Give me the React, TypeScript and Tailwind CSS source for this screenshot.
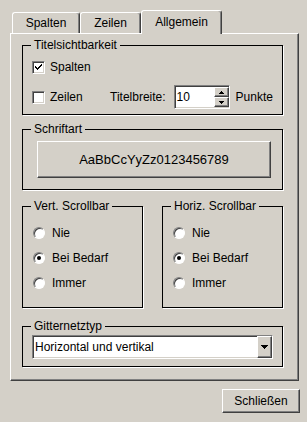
import React, { ReactNode } from 'react';
import clsx from 'clsx';

// classic win95-ish bevels
const SUNKEN =
  'border border-t-[#808080] border-l-[#808080] border-b-white border-r-white shadow-[inset_1px_1px_0_#404040,inset_-1px_-1px_0_#d4d0c8]';
const RAISED =
  'border border-t-white border-l-white border-b-[#404040] border-r-[#404040] shadow-[inset_-1px_-1px_0_#808080]';

type GroupProps = { title: string; className?: string; children?: ReactNode };

const Group = ({ title, className, children }: GroupProps) => (
  <div className={clsx('relative shrink-0 border border-black shadow-[1px_1px_0_#fff]', className)}>
    <span className="absolute left-[8px] top-[-8px] h-[14px] bg-[#d4d0c8] px-[3px] leading-[14px] whitespace-nowrap">
      {title}
    </span>
    {children}
  </div>
);

const Tab = ({ label, active, className }: { label: string; active?: boolean; className: string }) => (
  <div
    className={clsx(
      'flex justify-center rounded-t-[3px] border-l border-t border-r border-l-white border-t-white border-r-[#404040] bg-[#d4d0c8] shadow-[inset_-1px_0_0_#808080]',
      active ? 'relative z-10 -mb-px h-[24px] pt-[4px]' : 'h-[21px] pt-[3px]',
      className
    )}
  >
    {label}
  </div>
);

const Checkbox = ({ label, checked }: { label: string; checked?: boolean }) => (
  <div className="flex items-center gap-[5px]">
    <span className={clsx('flex h-[13px] w-[13px] items-center justify-center bg-white', SUNKEN)}>
      {checked && (
        <svg width="9" height="9" viewBox="0 0 9 9" shapeRendering="crispEdges">
          <path d="M1 3h1v1h1v1h1V4h1V3h1V2h1V1h1v2H7v1H6v1H5v1H4v1H3V6H2V5H1z" fill="#000" />
        </svg>
      )}
    </span>
    <span>{label}</span>
  </div>
);

const Radio = ({ label, checked }: { label: string; checked?: boolean }) => (
  <div className="flex h-[18px] items-center gap-[7px]">
    <span
      className={clsx(
        'flex h-[12px] w-[12px] items-center justify-center rounded-full bg-white border border-t-[#808080] border-l-[#808080] border-b-white border-r-white shadow-[inset_1px_1px_0_#404040]'
      )}
    >
      {checked && <span className="h-[4px] w-[4px] rounded-full bg-black" />}
    </span>
    <span>{label}</span>
  </div>
);

const Arrow = ({ down, size = 'sm' }: { down?: boolean; size?: 'sm' | 'md' }) => {
  const w = size === 'md' ? 7 : 5;
  const h = size === 'md' ? 4 : 3;
  return (
    <svg width={w} height={h} viewBox={`0 0 ${w} ${h}`} shapeRendering="crispEdges">
      <polygon points={down ? `0,0 ${w},0 ${w / 2},${h}` : `${w / 2},0 ${w},${h} 0,${h}`} fill="#000" />
    </svg>
  );
};

const ScrollGroup = ({ title }: { title: string }) => (
  <Group title={title} className="h-[102px] w-[121px]">
    <div className="flex flex-col gap-[7px] pl-[10px] pt-[17px]">
      <Radio label="Nie" />
      <Radio label="Bei Bedarf" checked />
      <Radio label="Immer" />
    </div>
  </Group>
);

export default function App() {
  return (
    <div className="h-[422px] w-[307px] overflow-hidden bg-[#d4d0c8] pl-[10px] pt-[10px] font-['Liberation_Sans',Arial,sans-serif] text-[12px] leading-[14px] text-black">
      {/* tab strip */}
      <div className="ml-[2px] flex h-[23px] items-end">
        <Tab label="Spalten" className="w-[68px]" />
        <Tab label="Zeilen" className="w-[61px]" />
        <Tab label="Allgemein" active className="w-[81px]" />
      </div>

      {/* tab page */}
      <div className="flex h-[348px] w-[289px] flex-col border border-l-white border-t-white border-r-[#404040] border-b-[#404040] pl-[11px] pr-[15px] pt-[11px] shadow-[inset_-1px_-1px_0_#808080]">
        <Group title="Titelsichtbarkeit" className="h-[70px]">
          <div className="pl-[9px] pt-[12px]">
            <div className="flex h-[18px] items-center">
              <Checkbox label="Spalten" checked />
            </div>
            <div className="mt-[9px] flex h-[24px] items-center">
              <div className="w-[78px]">
                <Checkbox label="Zeilen" />
              </div>
              <span>Titelbreite:</span>
              <div className={clsx('ml-[8px] flex h-[24px] w-[56px] items-center bg-white', SUNKEN)}>
                <span className="flex-1 pl-[2px]">10</span>
                <div className="flex h-full w-[15px] flex-col py-[1px]">
                  <div className={clsx('flex flex-1 items-center justify-center bg-[#d4d0c8]', RAISED)}>
                    <Arrow />
                  </div>
                  <div className={clsx('flex flex-1 items-center justify-center bg-[#d4d0c8]', RAISED)}>
                    <Arrow down />
                  </div>
                </div>
              </div>
              <span className="ml-[6px]">Punkte</span>
            </div>
          </div>
        </Group>

        <Group title="Schriftart" className="mt-[14px] h-[61px]">
          <div className="pl-[14px] pt-[11px]">
            <div className={clsx('flex h-[37px] w-[234px] items-center justify-center bg-[#d4d0c8] text-[13px]', RAISED)}>
              AaBbCcYyZz0123456789
            </div>
          </div>
        </Group>

        <div className="mt-[16px] flex gap-[19px]">
          <ScrollGroup title="Vert. Scrollbar" />
          <ScrollGroup title="Horiz. Scrollbar" />
        </div>

        <Group title="Gitternetztyp" className="mt-[18px] h-[41px]">
          <div className="pl-[9px] pt-[8px]">
            <div className={clsx('flex h-[24px] w-[241px] items-center bg-white', SUNKEN)}>
              <span className="flex-1 pl-[2px]">Horizontal und vertikal</span>
              <div className={clsx('flex h-full w-[15px] items-center justify-center bg-[#d4d0c8]', RAISED)}>
                <Arrow down size="md" />
              </div>
            </div>
          </div>
        </Group>
      </div>

      <div className="mt-[8px] flex justify-end pr-[7px]">
        <button className={clsx('h-[24px] w-[78px] bg-[#d4d0c8] text-[12px]', RAISED)}>Schließen</button>
      </div>
    </div>
  );
}
